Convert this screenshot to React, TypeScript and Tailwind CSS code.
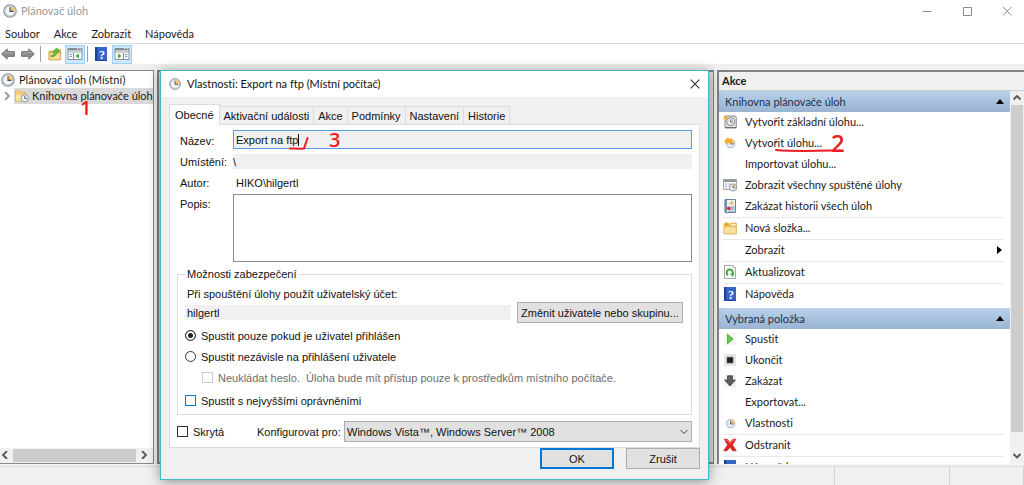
import React, { useState } from "react";
import clsx from "clsx";

/* ---------- icons ---------- */

function ClockIcon({ className = "size-3.5" }: { className?: string }) {
  return (
    <svg viewBox="0 0 16 16" className={clsx("shrink-0", className)} aria-hidden="true">
      <circle cx="8" cy="8" r="7.2" fill="#d5dbe0" stroke="#8d959b" strokeWidth="1.2" />
      <circle cx="8" cy="8" r="5.4" fill="#f4f8fb" stroke="#a9b3ba" strokeWidth=".6" />
      <path d="M8 8V2.8A5.2 5.2 0 0 1 13.2 8Z" fill="#f6c65f" />
      <path d="M8 3.8V8.4H12" fill="none" stroke="#45525e" strokeWidth="1.3" />
    </svg>
  );
}

function SmallClockIcon({ star = false }: { star?: boolean }) {
  return (
    <svg viewBox="0 0 14 14" className="size-3.5 shrink-0" aria-hidden="true">
      <circle cx="7.6" cy="7.6" r="4.2" fill="#e3ebf3" stroke="#a5b0bc" />
      <path d="M7.6 7.6V3.6A4 4 0 0 1 11.6 7.6Z" fill="#f6c068" />
      <path d="M7.6 5V7.9H10.4" fill="none" stroke="#4a6480" />
      {star && <path d="M4.8 1.800 6.2 3 9.200 3.200 7.600 5 8 7.200 5.400 6.600 3 7.800 2.800 5.800 1.400 4.600 3.500 3.700Z" fill="#f5ab26" stroke="#f0a52a" strokeWidth=".8" strokeLinejoin="round" />}
    </svg>
  );
}

function BasicTaskIcon() {
  return (
    <svg viewBox="0 0 14 14" className="size-3.5 shrink-0" aria-hidden="true">
      <path d="M2 1H12L13.3 2V12.5H2Z" fill="#e4e2df" stroke="#8f8b88" />
      <path d="M2 12.8H13" stroke="#6c6867" strokeWidth="1.2" />
      <circle cx="7.7" cy="6.6" r="4" fill="#fff" stroke="#827f7e" />
      <circle cx="7.7" cy="6.6" r="2.5" fill="#eef3f6" stroke="#b5babd" strokeWidth=".5" />
      <path d="M7.7 4.6V7H9.6" fill="none" stroke="#555" />
      <path d="M2.5 0 3.4 1.5 5.2 1.7 4.1 3 4.3 4.8 2.6 4 1 4.8 1.2 3 0 1.7 1.8 1.4Z" fill="#f6a92e" />
    </svg>
  );
}

function RunningTasksIcon() {
  return (
    <svg viewBox="0 0 14 14" className="size-3.5 shrink-0" aria-hidden="true">
      <path d="M.5 1.5H13.5V11.5H.5Z" fill="#f7f8f9" stroke="#a4a8ab" />
      <path d="M.5 1.5H13.5V4H.5Z" fill="#92989e" />
      <path d="M2 6H4M5.5 6H7.5M2 8H4M5.5 8H7M2 10H4" stroke="#9eb0bf" />
      <circle cx="10" cy="9.5" r="3.6" fill="#eef1f3" stroke="#929ca5" />
      <path d="M10 9.5V6.5A3 3 0 0 1 13 9.5Z" fill="#f1c575" />
      <path d="M10 7.4V9.8H12" fill="none" stroke="#4d5d6c" strokeWidth=".9" />
    </svg>
  );
}

function HistoryIcon() {
  return (
    <svg viewBox="0 0 14 14" className="size-3.5 shrink-0" aria-hidden="true">
      <path d="M2 .5H12.5V13.5H2Z" fill="#eef4fb" stroke="#6d7f96" />
      <path d="M3 1V13" stroke="#52709a" strokeWidth="1.6" />
      <path d="M1 2.5H4M1 5H4M1 7.5H4M1 10H4M1 12.2H4" stroke="#8a9fb8" strokeWidth=".8" />
      <path d="M8.5 1.5 11 5.5H6Z" fill="#f5b93c" />
      <path d="M7.5 8H11.5M7.5 10H11.5" stroke="#5a82b5" />
      <circle cx="5.8" cy="9.3" r="1.9" fill="#d9332e" />
      <path d="M5 12.2H11.5" stroke="#84a3c4" />
    </svg>
  );
}

function NewFolderIcon() {
  return (
    <svg viewBox="0 0 14 14" className="size-3.5 shrink-0" aria-hidden="true">
      <path d="M1 3.5H7L8 2H13.3V12.8H1Z" fill="#eec367" stroke="#d8a851" strokeWidth=".7" />
      <path d="M8.6 3H12.6V4.5H8Z" fill="#fff6dc" />
      <path d="M1 5.8H13.3V12.8H1Z" fill="#fae1a0" stroke="#dbb25f" strokeWidth=".7" />
      <path d="M3.2.5 4.3 2 6.4 2 5.2 3.6 5.6 5.5 3.6 4.8 1.7 6 1.8 4 .3 2.7 2.2 2.2Z" fill="#f4a51d" />
    </svg>
  );
}

function RefreshIcon() {
  return (
    <svg viewBox="0 0 14 14" className="size-3.5 shrink-0" aria-hidden="true">
      <path d="M1.5.5H10L12.5 3V13.5H1.5Z" fill="#fbfbfb" stroke="#a8a8a8" />
      <path d="M10 .5V3H12.5" fill="#ddd" stroke="#a8a8a8" strokeWidth=".6" />
      <path d="M5 10.2A3.1 3.1 0 1 1 9.3 9.4" fill="none" stroke="#3cae3c" strokeWidth="2" />
      <path d="M7 8.6H11.3L9.8 12Z" fill="#3cae3c" />
    </svg>
  );
}

function HelpIcon() {
  return (
    <svg viewBox="0 0 14 14" className="size-3.5 shrink-0" aria-hidden="true">
      <path d="M1 0H13V14H1Z" fill="#3865c8" />
      <path d="M1 0H3.2V14H1Z" fill="#213f8d" />
      <path d="M1 13.4H13" stroke="#2448a0" />
      <text x="8" y="11.5" textAnchor="middle" fontSize="12" fontWeight="bold" fill="#fff" fontFamily="Liberation Serif, serif">?</text>
    </svg>
  );
}

function PlayIcon() {
  return (
    <svg viewBox="0 0 14 14" className="size-3.5 shrink-0" aria-hidden="true">
      <path d="M1 1H13V13H1Z" fill="#f5f5f5" />
      <path d="M4.5 2.2 10 7 4.5 11.8Z" fill="#5fcc45" stroke="#37a32b" strokeWidth=".8" />
    </svg>
  );
}

function StopIcon() {
  return (
    <svg viewBox="0 0 14 14" className="size-3.5 shrink-0" aria-hidden="true">
      <path d="M1 1H13V13H1Z" fill="#e6e6e6" />
      <path d="M4 4.2H10V10H4Z" fill="#222" stroke="#555" strokeWidth=".6" />
    </svg>
  );
}

function DisableIcon() {
  return (
    <svg viewBox="0 0 14 14" className="size-3.5 shrink-0" aria-hidden="true">
      <path d="M1 1H13V13H1Z" fill="#f3f3f3" />
      <path d="M4.5 1.8H9.5V6H12.4L7 12 1.6 6H4.5Z" fill="#5d5d5d" stroke="#444" strokeWidth=".8" />
    </svg>
  );
}

function DeleteIcon() {
  return (
    <svg viewBox="0 0 14 14" className="size-3.5 shrink-0" aria-hidden="true">
      <path d="M1.2 1.2H4.3L7 4.6 10 1.2H13L9.4 6.7 13.2 12.8H9.8L7 9.2 4 12.8H.8L4.7 6.9Z" fill="#e8231d" stroke="#c7211c" strokeWidth=".8" strokeLinejoin="round" />
      <path d="M2.2 2H4L7 5.5 10.2 2H12" fill="none" stroke="#f7817a" strokeWidth=".9" />
    </svg>
  );
}

function ArrowIcon({ flip = false }: { flip?: boolean }) {
  return (
    <svg viewBox="0 0 14 12" className={clsx("h-3 w-3.5", flip && "-scale-x-100")} aria-hidden="true">
      <path d="M.6 6 6.2.8V3.6H13.4V8.4H6.2V11.2Z" fill="#8b8b8b" stroke="#6f6f6f" strokeWidth=".9" strokeLinejoin="round" />
      <path d="M3 5.8 5.6 3.6V5H12.4" fill="none" stroke="#ababab" />
    </svg>
  );
}

function UpFolderIcon() {
  return (
    <svg viewBox="0 0 14 14" className="size-3.5" aria-hidden="true">
      <path d="M1 4H6L7.5 2.5H12.6V12.8H1Z" fill="#e9bd62" stroke="#c99b45" strokeWidth=".7" />
      <path d="M1 6H12.6V12.8H1Z" fill="#f7dc95" stroke="#d1a64e" strokeWidth=".7" />
      <path d="M3 8.6C5.4 8.4 6.4 7 6.7 5L5 5 8.6.8 11.2 5H9.2C8.6 8.2 6.5 9.8 3 9.9Z" fill="#5cc43c" stroke="#35952a" strokeWidth=".6" />
    </svg>
  );
}

function PaneIcon({ side }: { side: "left" | "right" }) {
  return (
    <svg viewBox="0 0 16 14" className="h-3.5 w-4" aria-hidden="true">
      <path d="M1 1.5H15V12.5H1Z" fill="#fbfbfb" stroke="#8c9299" />
      <path d="M1 1.5H15V3.5H1Z" fill="#858b92" />
      <path d="M1.5 5H14.5" stroke="#a2a7ad" />
      <path d="M10 1.8H11.2M12.6 1.8H13.8" stroke="#fff" />
      {side === "left" ? (
        <>
          <path d="M6.5 6V12" stroke="#8c9299" />
          <path d="M2.5 7.5H5M2.5 9.5H5" stroke="#7ea2cc" />
          <path d="M11.8 6.5V11.5L8.6 9Z" fill="#2fa62f" />
        </>
      ) : (
        <>
          <path d="M9.5 6V12" stroke="#8c9299" />
          <path d="M11 7.5H13.5M11 9.5H13.5" stroke="#7ea2cc" />
          <path d="M4.2 6.5V11.5L7.4 9Z" fill="#2fa62f" />
        </>
      )}
    </svg>
  );
}

function LibraryIcon() {
  return (
    <svg viewBox="0 0 16 15" className="h-3.5 w-4 shrink-0" aria-hidden="true">
      <path d="M1 2H6L7.2 3.5H12V13H1Z" fill="#f5cf78" stroke="#d8ab50" strokeWidth=".7" />
      <path d="M1 5.5H12V13H1Z" fill="#fbe3a6" stroke="#dcb35c" strokeWidth=".6" />
      <circle cx="11" cy="10" r="4" fill="#eef3f6" stroke="#85909a" />
      <path d="M11 7.5V10.3H13.3" fill="none" stroke="#44525e" />
    </svg>
  );
}

function Chevron({ className, d = "M1.5 5.5 5 2 8.5 5.5" }: { className?: string; d?: string }) {
  return (
    <svg viewBox="0 0 10 8" className={clsx("h-2 w-2.5", className)} aria-hidden="true">
      <path d={d} fill="none" stroke="currentColor" strokeWidth="1.8" />
    </svg>
  );
}

/* ---------- shared pieces ---------- */

const sans = "font-['Liberation_Sans',Arial,sans-serif]";
const ui = "font-['Lato','Noto_Sans',sans-serif] [font-variant-ligatures:none]";

function Mark({ children, className }: { children: React.ReactNode; className: string }) {
  return (
    <span className={clsx("pointer-events-none absolute z-20 font-['Open_Sans',sans-serif] leading-none font-semibold text-[#ed1c24]", className)}>
      {children}
    </span>
  );
}

type Action = { label: string; icon?: React.ReactNode; divided?: boolean; submenu?: boolean; marked?: boolean };

const libraryActions: Action[] = [
  { label: "Vytvořit základní úlohu...", icon: <BasicTaskIcon /> },
  { label: "Vytvořit úlohu...", icon: <SmallClockIcon star />, marked: true },
  { label: "Importovat úlohu..." },
  { label: "Zobrazit všechny spuštěné úlohy", icon: <RunningTasksIcon /> },
  { label: "Zakázat historii všech úloh", icon: <HistoryIcon />, divided: true },
  { label: "Nová složka...", icon: <NewFolderIcon />, divided: true },
  { label: "Zobrazit", submenu: true, divided: true },
  { label: "Aktualizovat", icon: <RefreshIcon />, divided: true },
  { label: "Nápověda", icon: <HelpIcon /> },
];

const itemActions: Action[] = [
  { label: "Spustit", icon: <PlayIcon /> },
  { label: "Ukončit", icon: <StopIcon /> },
  { label: "Zakázat", icon: <DisableIcon /> },
  { label: "Exportovat..." },
  { label: "Vlastnosti", icon: <SmallClockIcon />, divided: true },
  { label: "Odstranit", icon: <DeleteIcon />, divided: true },
  { label: "Nápověda", icon: <HelpIcon /> },
];

function ActionGroup({ title, actions }: { title: string; actions: Action[] }) {
  return (
    <section className="shrink-0 pb-[3px]">
      <h3 className="flex h-[21px] items-center justify-between bg-gradient-to-b from-[#b9d1ea] to-[#99b4d1] pr-1.5 pl-1.5 text-[#1e2f4b]">
        {title}
        <svg viewBox="0 0 8 5" className="h-[5px] w-2" aria-hidden="true">
          <path d="M0 5 4 0 8 5Z" fill="#000" />
        </svg>
      </h3>
      <ul>
        {actions.map((a) => (
          <li key={a.label}>
            <button type="button" className="relative flex h-[21px] w-full items-center pr-1.5 pb-0.5 pl-1 text-left">
              <span className="flex w-[22px] shrink-0">{a.icon}</span>
              <span className="flex-1">{a.label}</span>
              {a.submenu && (
                <svg viewBox="0 0 5 8" className="mr-0.5 h-2 w-[5px]" aria-hidden="true">
                  <path d="M0 0 5 4 0 8Z" fill="#000" />
                </svg>
              )}
              {a.marked && (
                <>
                  <svg viewBox="0 0 78 8" className="pointer-events-none absolute top-3.5 left-14 h-2 w-[78px]" aria-hidden="true">
                    <path d="M1 3C18 4.500 38 4 57 3.500" fill="none" stroke="#ed1c24" strokeWidth="2" strokeLinecap="round" />
                  </svg>
                  <Mark className="-top-0.5 left-28 text-2xl">2</Mark>
                </>
              )}
            </button>
            {a.divided && <div className="mr-1.5 ml-1 h-px bg-[#e9e9e9]" />}
          </li>
        ))}
      </ul>
    </section>
  );
}

const tabs = ["Obecné", "Aktivační události", "Akce", "Podmínky", "Nastavení", "Historie"];

function Dialog() {
  const [tab, setTab] = useState(tabs[0]);
  const [logon, setLogon] = useState("only");
  return (
    <div
      role="dialog"
      aria-labelledby="dlg-title"
      className={clsx(
        "absolute top-[70px] left-40 z-10 flex w-[549px] flex-col border border-[#3fbcc2] bg-[#f0f0f0] text-[11px] leading-[14px] text-[#111] shadow-[0_2px_12px_rgba(0,0,0,0.4)]",
        sans,
      )}
    >
      <header className={clsx("flex h-[26px] items-center gap-1.5 bg-white pr-2 pl-2", ui)}>
        <ClockIcon className="size-3" />
        <h2 id="dlg-title" className="flex-1">Vlastnosti: Export na ftp (Místní počítač)</h2>
        <button type="button" aria-label="Zavřít">
          <svg viewBox="0 0 10 10" className="size-2.5" aria-hidden="true">
            <path d="M.7.7 9.300 9.300M9.300.7.7 9.300" stroke="#333" strokeWidth="1.1" />
          </svg>
        </button>
      </header>

      <div className="px-2 pt-[7px] pb-2.5">
        <div role="tablist" className="flex h-5 items-end">
          {tabs.map((t) => (
            <button
              key={t}
              type="button"
              role="tab"
              aria-selected={t === tab}
              onClick={() => setTab(t)}
              className={clsx(
                "border-t border-r border-[#dcdcdc] whitespace-nowrap",
                t === tab ? "z-10 -mb-px h-[21px] border-l bg-white px-[5px]" : "h-[18px] bg-[#f0f0f0] px-1 pt-px",
              )}
            >
              {t}
            </button>
          ))}
        </div>

        <div role="tabpanel" className="border border-[#dcdcdc] bg-white px-[7px] pt-[5px] pb-[5px]">
          <div className="grid grid-cols-[53px_1fr] pl-[3px]">
            <label htmlFor="name" className="pt-1">Název:</label>
            <div className="relative">
              <input
                id="name"
                defaultValue="Export na ftp"
                className="block h-[19px] w-full border border-[#569de5] bg-[#f0f0f0] px-0.5 outline-none"
              />
              <svg viewBox="0 0 22 16" className="pointer-events-none absolute top-1 left-14 h-4 w-[22px]" aria-hidden="true">
                <path d="M9.500 0V12" stroke="#111" />
                <path d="M1 14.500C5 14.500 10 15 15 14.500L18.500 4" fill="none" stroke="#ed1c24" strokeWidth="2" strokeLinecap="round" strokeLinejoin="round" />
              </svg>
              <Mark className="top-0 left-24 text-xl">3</Mark>
            </div>
            <label htmlFor="location" className="pt-1.5">Umístění:</label>
            <input id="location" readOnly defaultValue={"\\"} className="mt-[5px] block h-[15px] w-full bg-[#f0f0f0] outline-none" />
            <span className="pt-[7px]">Autor:</span>
            <span className="h-[25px] pt-[7px] pl-[3px]">HIKO\hilgertl</span>
            <label htmlFor="desc" className="pt-[3px]">Popis:</label>
            <textarea id="desc" className="block h-[68px] w-full resize-none border border-[#8a8a8a] bg-white outline-none" />
          </div>

          <fieldset className="mt-[5px] h-[148px] border border-[#dcdcdc] pr-2 pl-[7px]">
            <legend className="px-0.5">Možnosti zabezpečení</legend>
            <label htmlFor="account" className="mt-[5px] block pl-0.5 leading-4">Při spouštění úlohy použít uživatelský účet:</label>
            <div className="mb-0.5 flex items-center gap-1.5">
              <input id="account" readOnly defaultValue="hilgertl" className="h-[15px] min-w-0 flex-1 bg-[#f0f0f0] px-0.5 outline-none" />
              <button type="button" className="h-[21px] w-[166px] border border-[#adadad] bg-[#e1e1e1]">
                Změnit uživatele nebo skupinu...
              </button>
            </div>
            {[
              ["only", "Spustit pouze pokud je uživatel přihlášen"],
              ["any", "Spustit nezávisle na přihlášení uživatele"],
            ].map(([value, label]) => (
              <label key={value} className="flex h-[21px] items-center gap-[5px]">
                <input
                  type="radio"
                  name="logon"
                  value={value}
                  checked={logon === value}
                  onChange={() => setLogon(value)}
                  className="size-[11px] appearance-none rounded-full border border-[#333] bg-white checked:bg-[#222] checked:shadow-[inset_0_0_0_2px_#fff]"
                />
                {label}
              </label>
            ))}
            <label className="flex h-[21px] items-center gap-[5px] pl-[17px] text-[#6d6d6d]">
              <input type="checkbox" disabled className="size-[11px] shrink-0 appearance-none border border-[#ccc] bg-white" />
              <span className="whitespace-pre">Neukládat heslo.  Úloha bude mít přístup pouze k prostředkům místního počítače.</span>
            </label>
            <label className="mt-0.5 flex h-[21px] items-center gap-[5px]">
              <input type="checkbox" className="size-[11px] appearance-none border border-[#0078d7] bg-white checked:bg-[#0078d7]" />
              Spustit s nejvyššími oprávněními
            </label>
          </fieldset>

          <div className="mt-1.5 flex items-center">
            <label className="flex w-20 items-center gap-[5px]">
              <input type="checkbox" className="size-[11px] appearance-none border border-[#333] bg-white checked:bg-[#333]" />
              Skrytá
            </label>
            <label htmlFor="target" className="w-[87px]">Konfigurovat pro:</label>
            <div className="relative flex-1">
              <select id="target" className="block h-[21px] w-full appearance-none border border-[#adadad] bg-[#e1e1e1] px-0.5 outline-none">
                <option>Windows Vista™, Windows Server™ 2008</option>
              </select>
              <svg viewBox="0 0 8 6" className="pointer-events-none absolute top-2 right-1 h-1.5 w-2" aria-hidden="true">
                <path d="M.5 1 4 4.500 7.500 1" fill="none" stroke="#444" />
              </svg>
            </div>
          </div>
        </div>

        <div className="flex justify-end gap-3">
          <button type="button" className="h-[21px] w-[74px] border-2 border-[#0078d7] bg-[#e1e1e1]">OK</button>
          <button type="button" className="h-[21px] w-[74px] border border-[#adadad] bg-[#e1e1e1]">Zrušit</button>
        </div>
      </div>
    </div>
  );
}

export default function App() {
  return (
    <div className={clsx("relative flex h-screen flex-col overflow-hidden bg-[#f0f0f0] text-[11px] leading-4 text-[#1a1a1a]", ui)}>
      <header className="flex h-[22px] shrink-0 items-center bg-white pl-[3px]">
        <ClockIcon />
        <h1 className="flex-1 pl-1 text-[#999]">Plánovač úloh</h1>
        <div className="flex items-center gap-[30px] pr-3 text-[#8a8a8a]">
          <button type="button" aria-label="Minimalizovat">
            <svg viewBox="0 0 10 10" className="size-2.5"><path d="M1 5.500H9.500" stroke="currentColor" /></svg>
          </button>
          <button type="button" aria-label="Maximalizovat">
            <svg viewBox="0 0 10 10" className="size-2.5"><path d="M1.500 1.500H9.500V9.500H1.500Z" fill="none" stroke="currentColor" /></svg>
          </button>
          <button type="button" aria-label="Zavřít">
            <svg viewBox="0 0 10 10" className="size-2.5"><path d="M1 1 9.500 9.500M9.500 1 1 9.500" stroke="currentColor" /></svg>
          </button>
        </div>
      </header>

      <nav className="flex h-[22px] shrink-0 items-center gap-3.5 border-b border-[#d9d9d9] bg-white pt-0.5 pl-[5px]">
        {["Soubor", "Akce", "Zobrazit", "Nápověda"].map((m) => (
          <button key={m} type="button">{m}</button>
        ))}
      </nav>

      <div role="toolbar" className="flex h-5 shrink-0 items-center bg-white pl-px">
        <button type="button" aria-label="Zpět"><ArrowIcon /></button>
        <button type="button" aria-label="Vpřed" className="ml-1.5"><ArrowIcon flip /></button>
        <span className="mx-[5px] h-4 w-px bg-[#a0a0a0]" />
        <button type="button" aria-label="O úroveň výš" className="ml-0.5"><UpFolderIcon /></button>
        <button type="button" aria-label="Strom konzoly" className="ml-[3px] flex h-[19px] w-5 items-center justify-center border border-[#99d1ff] bg-[#cce8ff]">
          <PaneIcon side="left" />
        </button>
        <span className="mx-0.5 h-4 w-px bg-[#a0a0a0]" />
        <button type="button" aria-label="Nápověda" className="ml-1"><HelpIcon /></button>
        <button type="button" aria-label="Podokno akcí" className="ml-1 flex h-[19px] w-5 items-center justify-center border border-[#99d1ff] bg-[#cce8ff]">
          <PaneIcon side="right" />
        </button>
      </div>

      <main className="flex min-h-0 flex-1 gap-[3px] pt-1.5 pb-0.5">
        <aside className="flex w-[154px] flex-col justify-between border-t border-r border-b border-[#828790] bg-white">
          <ul className="pt-px">
            <li className="flex h-4 items-center pl-px">
              <ClockIcon />
              <span className="pl-1 whitespace-nowrap">Plánovač úloh (Místní)</span>
            </li>
            <li className="relative flex h-4 items-center">
              <Chevron className="w-3.5 shrink-0 text-[#999]" d="M3 0 7 4 3 8" />
              <span className="flex h-4 flex-1 items-center bg-[#d9d9d9] whitespace-nowrap">
                <LibraryIcon />
                <span className="pl-0.5">Knihovna plánovače úloh</span>
              </span>
              <Mark className="top-2.5 left-20 text-xl">1</Mark>
            </li>
          </ul>
          <div className="flex h-[15px] items-center bg-[#f0f0f0] pb-px text-[#555]">
            <button type="button" aria-label="Posunout doleva"><Chevron d="M7 0 3 4 7 8" /></button>
            <div className="mx-[3px] h-[13px] w-[123px] bg-[#cdcdcd]" />
            <button type="button" aria-label="Posunout doprava"><Chevron d="M3 0 7 4 3 8" /></button>
          </div>
        </aside>

        <section aria-label="Úlohy" className="flex-1 border-2 border-r border-[#828282] bg-[#dcdcdc]" />

        <aside className="flex w-[307px] flex-col border-t-2 border-l-2 border-[#828282] bg-white">
          <h2 className="flex h-[19px] shrink-0 items-center border-b border-[#d0d0d0] bg-[#f0f0f0] pl-[3px] font-bold">Akce</h2>
          <div className="flex min-h-0 flex-1">
            <div className="flex min-w-0 flex-1 flex-col overflow-hidden">
              <ActionGroup title="Knihovna plánovače úloh" actions={libraryActions} />
              <ActionGroup title="Vybraná položka" actions={itemActions} />
            </div>
            <div className="flex w-3.5 flex-col items-center bg-[#f0f0f0] text-[#555]">
              <button type="button" aria-label="Posunout nahoru" className="flex h-3.5 shrink-0 items-center"><Chevron /></button>
              <div className="w-3 flex-1 bg-[#cdcdcd]" />
              <button type="button" aria-label="Posunout dolů" className="flex h-8 shrink-0 items-end pb-1"><Chevron d="M1.500 2 5 5.500 8.500 2" /></button>
            </div>
          </div>
        </aside>
      </main>

      <footer className="flex h-[19px] shrink-0 border-t border-[#d9d9d9]">
        <div className="flex-1 border-r border-[#d0d0d0]" />
        <div className="w-[115px] border-r border-[#d0d0d0]" />
        <div className="w-[74px] border-r border-[#d0d0d0]" />
      </footer>

      <Dialog />
    </div>
  );
}
